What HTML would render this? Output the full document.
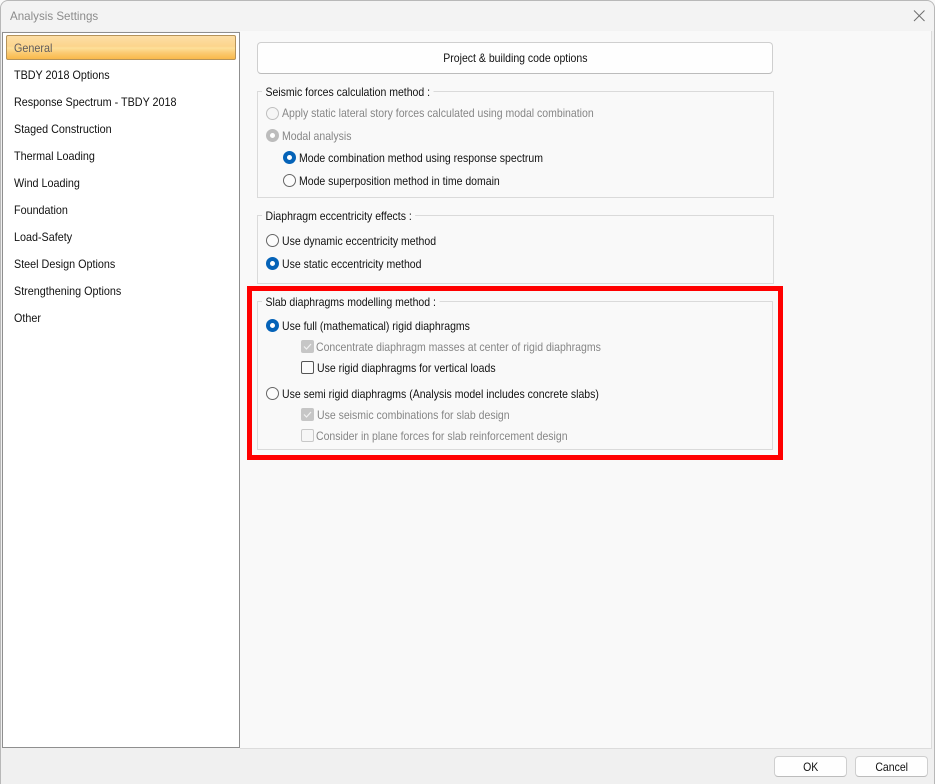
<!DOCTYPE html>
<html><head><meta charset="utf-8"><style>
html,body{margin:0;padding:0;width:935px;height:784px;overflow:hidden;background:#f9f9f9}
body{position:relative;font-family:"Liberation Sans",sans-serif;font-size:12px;color:#111}
.a{position:absolute;box-sizing:border-box}
.t{position:absolute;white-space:nowrap;line-height:16px;height:16px;transform:scaleX(.875);transform-origin:0 0}
.d{color:#868686}
.l{position:absolute;left:14px;white-space:nowrap;font-size:12px;line-height:16px;color:#111;transform:scaleX(.898);transform-origin:0 0}
.g{position:absolute;box-sizing:border-box;left:257px;width:517px;border:1px solid #dadada}
.gt{position:absolute;background:#f9f9f9;white-space:nowrap;line-height:16px;padding:0 4px;left:262px;transform:scaleX(.875);transform-origin:0 0}
.r{position:absolute;width:13px;height:13px;box-sizing:border-box;border-radius:50%;background:#fcfcfc;border:1px solid #666}
.r.on{background:#fff;border:4px solid #0563b8}
.r.dis{border-color:#bfbfbf;background:#f6f6f6}
.r.dison{background:#fff;border:4px solid #bcbcbc}
.c{position:absolute;width:13px;height:13px;box-sizing:border-box;border-radius:2px;border:1px solid #555;background:#fbfbfb}
.c.dis{border-color:#c8c8c8;background:#f6f6f6}
.c.don{border:0;background:#c6c6c6}
.c.don svg{position:absolute;left:0;top:0}
.b{position:absolute;box-sizing:border-box;background:#fefefe;border:1px solid #cfcfcf;border-bottom-color:#bcbcbc;border-radius:4px;text-align:center;white-space:nowrap}
.b span{display:inline-block;transform:scaleX(.875)}
</style></head><body>

<div class="a" style="left:0;top:0;width:935px;height:784px;background:#f0f0f0;border:1px solid #b8b8b8;border-radius:8px 8px 0 0;border-bottom:0"></div>
<div class="a" style="left:1px;top:1px;width:933px;height:30px;background:#f3f3f3;border-radius:8px 8px 0 0"></div>
<div class="t" style="left:10px;top:8px;color:#8c8c8c;transform:scaleX(.965)">Analysis Settings</div>
<svg class="a" style="left:913px;top:9px" width="13" height="13" viewBox="0 0 13 13"><path d="M1 1.5L11.5 12M11.5 1.5L1 12" stroke="#6e6e6e" stroke-width="1" fill="none"/></svg>

<div class="a" style="left:240px;top:31px;width:692px;height:718px;background:#f9f9f9;border-right:1px solid #dcdcdc;border-bottom:1px solid #dcdcdc"></div>

<div class="a" style="left:2px;top:32px;width:238px;height:716px;background:#fff;border:1px solid #8f8f8f"></div>
<div class="a" style="left:6px;top:35px;width:230px;height:25px;border:1px solid #b5935a;border-radius:2px;background:linear-gradient(#fddfa6 0%,#fcd48c 45%,#fde09a 52%,#fbc96f 75%,#f9b94a 100%)"></div>
<div class="l" style="top:40px;color:#5f5a5c">General</div>
<div class="l" style="top:67px">TBDY 2018 Options</div>
<div class="l" style="top:94px">Response Spectrum - TBDY 2018</div>
<div class="l" style="top:121px">Staged Construction</div>
<div class="l" style="top:148px">Thermal Loading</div>
<div class="l" style="top:175px">Wind Loading</div>
<div class="l" style="top:202px">Foundation</div>
<div class="l" style="top:229px">Load-Safety</div>
<div class="l" style="top:256px">Steel Design Options</div>
<div class="l" style="top:283px">Strengthening Options</div>
<div class="l" style="top:310px">Other</div>

<div class="b" style="left:257px;top:42px;width:516px;height:32px;line-height:30px"><span>Project &amp; building code options</span></div>

<div class="g" style="top:91px;height:107px"></div>
<div class="gt" style="top:84px">Seismic forces calculation method :</div>
<div class="r dis" style="left:266px;top:107px"></div><div class="t d" style="left:282px;top:105px">Apply static lateral story forces calculated using modal combination</div>
<div class="r dison" style="left:266px;top:129px"></div><div class="t d" style="left:282px;top:128px">Modal analysis</div>
<div class="r on" style="left:283px;top:151px"></div><div class="t" style="left:299px;top:150px">Mode combination method using response spectrum</div>
<div class="r" style="left:283px;top:174px"></div><div class="t" style="left:299px;top:173px">Mode superposition method in time domain</div>

<div class="g" style="top:215px;height:69px"></div>
<div class="gt" style="top:208px">Diaphragm eccentricity effects :</div>
<div class="r" style="left:266px;top:234px"></div><div class="t" style="left:282px;top:233px">Use dynamic eccentricity method</div>
<div class="r on" style="left:266px;top:257px"></div><div class="t" style="left:282px;top:256px">Use static eccentricity method</div>

<div class="a" style="left:247px;top:286px;width:536px;height:174px;border:5px solid #ff0000"></div>
<div class="g" style="top:301px;height:149px;width:516px"></div>
<div class="gt" style="top:294px">Slab diaphragms modelling method :</div>
<div class="r on" style="left:266px;top:319px"></div><div class="t" style="left:282px;top:318px">Use full (mathematical) rigid diaphragms</div>
<div class="c don" style="left:301px;top:340px"><svg width="13" height="13" viewBox="0 0 13 13"><path d="M3 6.5L5.5 9L10 4" stroke="#f2f2f2" stroke-width="1.2" fill="none"/></svg></div><div class="t d" style="left:316px;top:339px">Concentrate diaphragm masses at center of rigid diaphragms</div>
<div class="c" style="left:301px;top:361px"></div><div class="t" style="left:317px;top:360px">Use rigid diaphragms for vertical loads</div>
<div class="r" style="left:266px;top:387px"></div><div class="t" style="left:282px;top:386px">Use semi rigid diaphragms (Analysis model includes concrete slabs)</div>
<div class="c don" style="left:301px;top:408px"><svg width="13" height="13" viewBox="0 0 13 13"><path d="M3 6.5L5.5 9L10 4" stroke="#f2f2f2" stroke-width="1.2" fill="none"/></svg></div><div class="t d" style="left:317px;top:407px">Use seismic combinations for slab design</div>
<div class="c dis" style="left:301px;top:429px"></div><div class="t d" style="left:316px;top:428px">Consider in plane forces for slab reinforcement design</div>

<div class="b" style="left:774px;top:756px;width:73px;height:21px;line-height:20px"><span>OK</span></div>
<div class="b" style="left:855px;top:756px;width:73px;height:21px;line-height:20px"><span>Cancel</span></div>

</body></html>
